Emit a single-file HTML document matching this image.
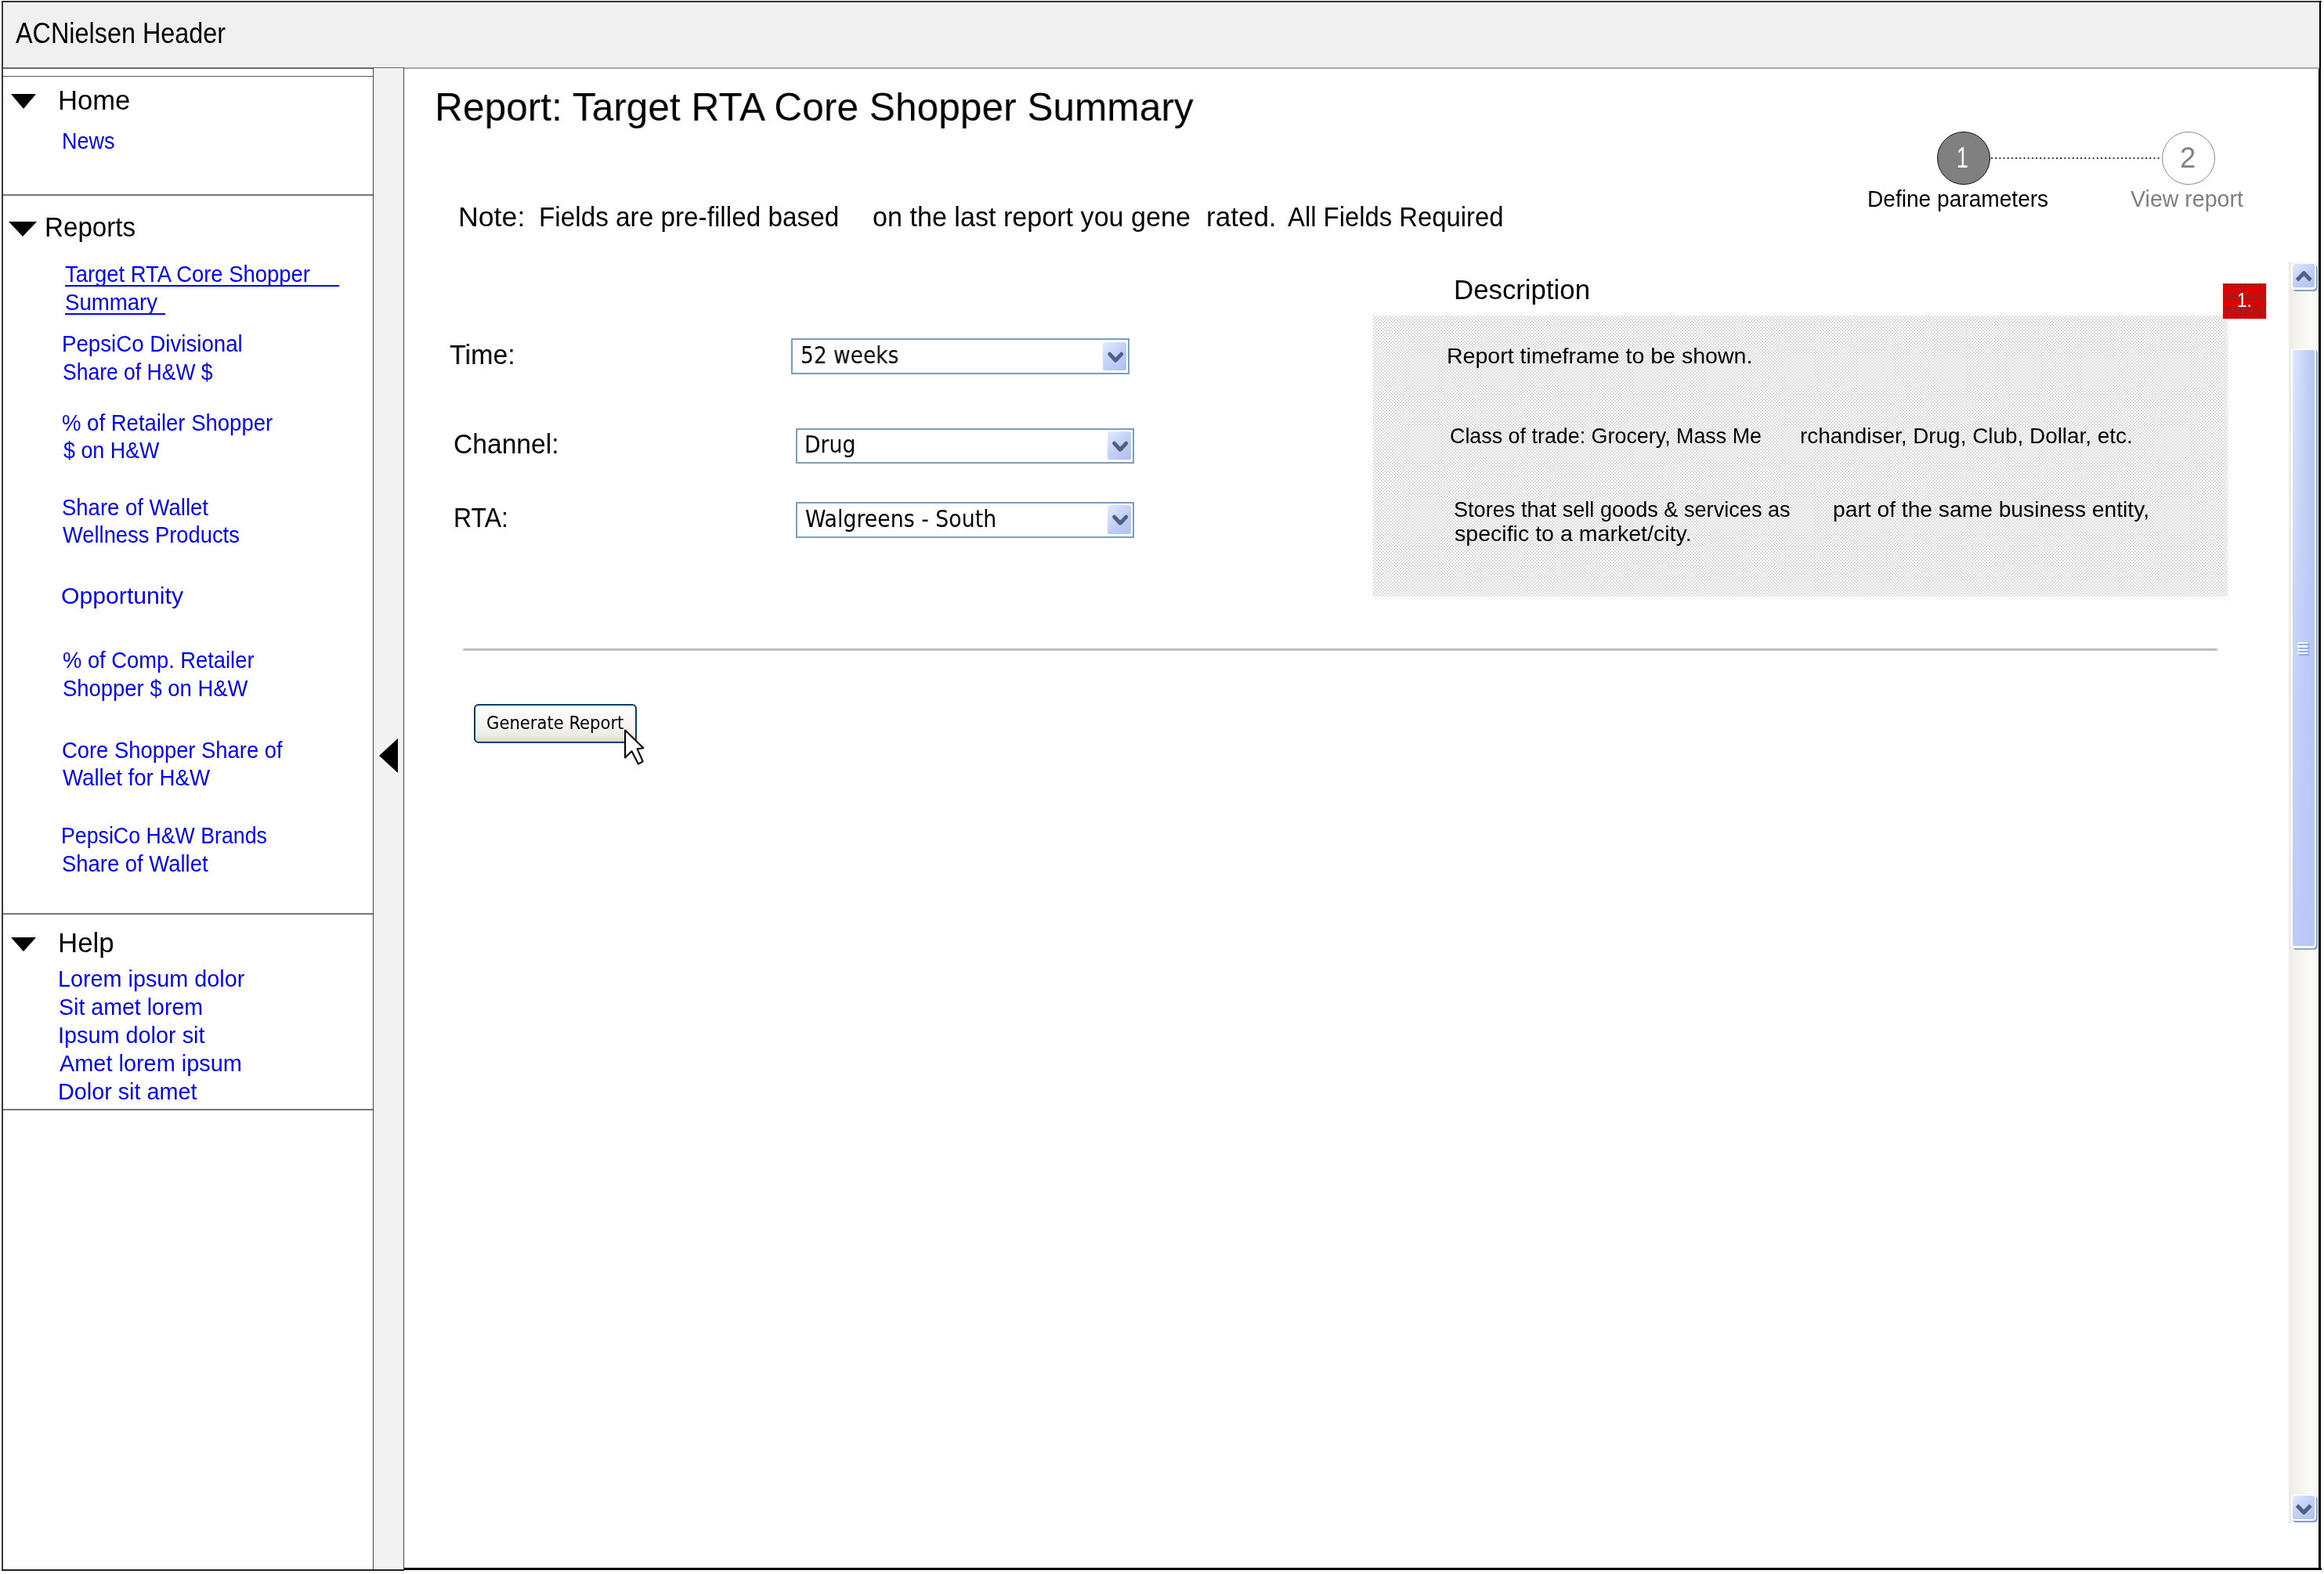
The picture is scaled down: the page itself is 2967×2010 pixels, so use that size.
<!DOCTYPE html>
<html lang="en">
<head>
<meta charset="utf-8">
<title>Report: Target RTA Core Shopper Summary</title>
<style>
html,body{margin:0;padding:0}
body{width:2967px;height:2010px;position:relative;overflow:hidden;background:#fff;font-family:"Liberation Sans",sans-serif;color:#000}
div,span,a,h1,h2,h3,label,i,b,p,button{position:absolute;margin:0;padding:0;box-sizing:border-box}
.t{white-space:pre;line-height:1;font-weight:normal;font-style:normal;transform-origin:0 0;text-decoration:none;display:block}
.dv{font-family:"DejaVu Sans Condensed","DejaVu Sans",sans-serif}
.ul{height:2px;background:#0000ff}
/* frame */
#frame-t{left:2px;top:1px;width:2961.5px;height:2px;background:#333}
#frame-l{left:2px;top:1px;width:1.7px;height:2004.5px;background:#3a3a3a}
#frame-r{left:2961.3px;top:1px;width:2.2px;height:2004px;background:#000}
#frame-r2{left:2959.9px;top:88px;width:2px;height:1916.5px;background:#000}
#frame-b{left:2px;top:2003.9px;width:514px;height:1.7px;background:#222}
#frame-b2{left:516px;top:2002.2px;width:2447.5px;height:3.3px;background:#000}
/* header */
#header{left:3.5px;top:3px;width:2958px;height:85px;background:#f0f0f0}
#header .ln1{left:0;top:83.2px;width:473px;height:1.9px;background:#6a6a6a}
#header .ln2{left:473px;top:83.2px;width:40px;height:1.9px;background:#777}
#header .ln3{left:512.5px;top:83.2px;width:2445.5px;height:1.9px;background:#ababab}
/* left nav */
#nav{left:3.5px;top:88px;width:473px;height:1916px;background:#fff}
#nav .box{left:0;width:473px;border:0 solid #555}
.tri{width:0;height:0;border-style:solid;border-color:#000 transparent transparent transparent}
/* splitter */
#split{left:475.9px;top:86.4px;width:40.3px;height:1918px;background:#f3f3f3;border-left:1.3px solid #444;border-right:1.3px solid #444;border-top:1.5px solid #666}
#split .arr{left:7.3px;top:856px;width:0;height:0;border-style:solid;border-width:22.7px 24.2px 22.7px 0;border-color:transparent #000 transparent transparent}
/* stepper */
.circ{width:68.4px;height:68.4px;border-radius:50%;top:167.5px}
#c1{left:2473px;background:#808080;border:1.2px solid #111}
#c2{left:2760px;background:#fff;border:1.2px solid #8a8a8a}
#dots{left:2542px;top:200.6px;width:218px;height:2.2px;background:radial-gradient(circle at 1.1px 1.1px,#333 0.9px,rgba(51,51,51,0) 1.3px) 0 0/5.2px 2.2px repeat-x}
/* selects */
.sel{height:45.7px;width:432.1px;border:2.4px solid #7b9ebd;background:#fff}
.sel .btn{right:2.2px;top:2.4px;width:30px;height:36.5px;border-radius:2.5px;background:linear-gradient(135deg,#e2eafc 0%,#c3d1f7 50%,#aebff1 100%)}
.sel .btn svg{position:absolute;left:0;top:0}
/* description */
#descbox{left:1752.5px;top:402.9px;width:1091px;height:359px;background-color:#fdfdfd;background-image:radial-gradient(circle at 1px 1px,rgba(110,110,110,.62) 0.3px,rgba(110,110,110,0) 0.95px),radial-gradient(circle at 3px 3px,rgba(110,110,110,.62) 0.3px,rgba(110,110,110,0) 0.95px);background-size:4px 4px}
#red{left:2837.9px;top:361.9px;width:55.2px;height:44.8px;background-color:#e20000;background-image:radial-gradient(circle at 1.5px 1.5px,rgba(70,60,60,.9) 0.5px,rgba(90,70,70,0) 1.1px);background-size:3px 3px}
#hr{left:591px;top:827.5px;width:2240px;height:3.7px;border-radius:2px;background:#bdbdbd}
#gen{left:604.6px;top:899.2px;width:208.2px;height:49.8px;border:2.3px solid #003c74;border-radius:6px;background:linear-gradient(180deg,#ffffff 0%,#f7f6f2 45%,#eeece5 82%,#dcd7cb 100%)}
/* scrollbar */
#sb{left:2922.4px;top:335px;width:37.5px;height:1609.8px;background:linear-gradient(90deg,#ecebe4 0,#f3f2ec 25%,#fbfbf8 75%,#f4f3ee 100%)}
.sbb{left:2.3px;width:32.6px;height:34.2px;border-radius:4.5px;background:#fff;box-shadow:1.8px 2.1px 0 0 #7b9fd8}
.sbb b{left:2.4px;top:1.9px;width:27.9px;height:29.7px;border-radius:2.5px;background:linear-gradient(135deg,#e1e9fc 0%,#c2d0f7 50%,#aec0f2 100%)}
.sbb svg{position:absolute;left:0;top:0}
#thumb{left:2.3px;top:110.1px;width:32.6px;height:765.7px;border-radius:4.5px;background:#fff;box-shadow:1.8px 1.8px 0 0 #7b9fd8}
#thumb b{left:2.4px;top:1.9px;width:27.9px;height:760.6px;border-radius:2.5px;background:linear-gradient(180deg,rgba(184,200,246,0) 0%,rgba(184,200,246,.55) 45%,rgba(184,200,246,.9) 100%),linear-gradient(90deg,#dee7fb 0%,#c9d6f8 50%,#b3c4f4 100%)}
#grip{left:8.8px;top:375px;width:16px;height:18px}
#grip i{left:0;width:13px;height:2.2px;background:#f4f7fe;box-shadow:2.4px 2.2px 0 0 #8fa9ea}

#page{left:0;top:0;width:2967px;height:2010px;will-change:transform}
#navtext,#main,#note,#steps{left:0;top:0;width:0;height:0}

</style>
</head>
<body>
<div id="page">
<div id="header"><i class="ln1"></i><i class="ln2"></i><i class="ln3"></i></div>
<div class="t" style="left:20.00px;top:25.40px;font-size:36.2px;transform:scaleX(0.8947)">ACNielsen Header</div>
<div id="nav">
  <div class="box" style="top:8.8px;height:153.2px;border-top-width:1.3px;border-right-width:1.3px;border-bottom-width:2px;border-bottom-color:#777"></div>
  <div class="box" style="top:1077.8px;height:252px;border-top:2px solid #777;border-bottom:2px solid #777;border-right-width:1.3px"></div>
</div>
<div id="split"><i class="arr"></i></div>
<div id="navtext">
<i class="tri" style="left:13.6px;top:119.8px;border-width:19px 16.8px 0 16.8px"></i>
<h3 class="t" style="left:74.21px;top:111.00px;font-size:34.8px;transform:scaleX(0.9948)">Home</h3>
<a class="t" style="left:79.21px;top:165.90px;font-size:28.6px;transform:scaleX(0.9451);color:#0000ff">News</a>
<i class="tri" style="left:11.2px;top:283px;border-width:19px 18.8px 0 18.8px"></i>
<h3 class="t" style="left:56.79px;top:272.80px;font-size:34.8px;transform:scaleX(0.9528)">Reports</h3>
<a class="t" style="left:83.20px;top:336.20px;font-size:28.6px;transform:scaleX(0.9586);color:#0000ff">Target RTA Core Shopper</a>
<i class="ul" style="left:83px;top:363.8px;width:350.0px"></i>
<a class="t" style="left:83.23px;top:372.40px;font-size:28.6px;transform:scaleX(0.9653);color:#0000ff">Summary</a>
<i class="ul" style="left:83px;top:400.0px;width:128.2px"></i>
<a class="t" style="left:78.56px;top:424.90px;font-size:28.6px;transform:scaleX(0.9680);color:#0000ff">PepsiCo Divisional</a>
<a class="t" style="left:79.57px;top:460.70px;font-size:28.6px;transform:scaleX(0.9271);color:#0000ff">Share of H&amp;W $</a>
<a class="t" style="left:78.54px;top:526.20px;font-size:28.6px;transform:scaleX(0.9623);color:#0000ff">% of Retailer Shopper</a>
<a class="t" style="left:81.20px;top:561.20px;font-size:28.6px;transform:scaleX(0.9400);color:#0000ff">$ on H&amp;W</a>
<a class="t" style="left:79.04px;top:633.70px;font-size:28.6px;transform:scaleX(0.9614);color:#0000ff">Share of Wallet</a>
<a class="t" style="left:80.00px;top:669.40px;font-size:28.6px;transform:scaleX(0.9557);color:#0000ff">Wellness Products</a>
<a class="t" style="left:78.44px;top:746.70px;font-size:28.6px;transform:scaleX(1.0555);color:#0000ff">Opportunity</a>
<a class="t" style="left:79.54px;top:828.70px;font-size:28.6px;transform:scaleX(0.9556);color:#0000ff">% of Comp. Retailer</a>
<a class="t" style="left:79.54px;top:864.90px;font-size:28.6px;transform:scaleX(0.9598);color:#0000ff">Shopper $ on H&amp;W</a>
<a class="t" style="left:79.04px;top:943.70px;font-size:28.6px;transform:scaleX(0.9576);color:#0000ff">Core Shopper Share of</a>
<a class="t" style="left:80.00px;top:979.40px;font-size:28.6px;transform:scaleX(0.9673);color:#0000ff">Wallet for H&amp;W</a>
<a class="t" style="left:78.13px;top:1053.20px;font-size:28.6px;transform:scaleX(0.9345);color:#0000ff">PepsiCo H&amp;W Brands</a>
<a class="t" style="left:79.04px;top:1088.70px;font-size:28.6px;transform:scaleX(0.9598);color:#0000ff">Share of Wallet</a>
<i class="tri" style="left:13.7px;top:1197px;border-width:18.6px 16.9px 0 16.9px"></i>
<h3 class="t" style="left:74.20px;top:1187.30px;font-size:34.8px;transform:scaleX(1.0013)">Help</h3>
<a class="t" style="left:73.69px;top:1236.20px;font-size:28.6px;transform:scaleX(1.0065);color:#0000ff">Lorem ipsum dolor</a>
<a class="t" style="left:74.70px;top:1272.40px;font-size:28.6px;transform:scaleX(0.9989);color:#0000ff">Sit amet lorem</a>
<a class="t" style="left:73.68px;top:1308.20px;font-size:28.6px;transform:scaleX(1.0082);color:#0000ff">Ipsum dolor sit</a>
<a class="t" style="left:75.70px;top:1344.20px;font-size:28.6px;transform:scaleX(1.0106);color:#0000ff">Amet lorem ipsum</a>
<a class="t" style="left:73.69px;top:1380.40px;font-size:28.6px;transform:scaleX(1.0061);color:#0000ff">Dolor sit amet</a>
</div>
<div id="main">
<h1 class="t" style="left:555.29px;top:111.60px;font-size:50.8px;transform:scaleX(0.9775)">Report: Target RTA Core Shopper Summary</h1>
<p id="note">
<span class="t" style="left:585.45px;top:260.00px;font-size:34.8px;transform:scaleX(1.0255)">Note:</span>
<span class="t" style="left:688.29px;top:260.00px;font-size:34.8px;transform:scaleX(0.9571)">Fields are pre-filled based</span>
<span class="t" style="left:1113.52px;top:260.00px;font-size:34.8px;transform:scaleX(0.9807)">on the last report you gene</span>
<span class="t" style="left:1540.39px;top:260.00px;font-size:34.8px;transform:scaleX(1.0070)">rated.</span>
<span class="t" style="left:1644.00px;top:260.00px;font-size:34.8px;transform:scaleX(0.9436)">All Fields Required</span>
</p>
<div id="steps">
<i class="circ" id="c1"></i><i id="dots"></i><i class="circ" id="c2"></i>
<span class="t" style="left:2497.98px;top:182.65px;font-size:37.5px;transform:scaleX(0.7111);color:#fff">1</span>
<span class="t" style="left:2783.03px;top:182.65px;font-size:37.5px;transform:scaleX(0.9722);color:#808080">2</span>
<span class="t" style="left:2384.03px;top:239.70px;font-size:28.6px;transform:scaleX(0.9828)">Define parameters</span>
<span class="t" style="left:2719.70px;top:239.70px;font-size:28.6px;transform:scaleX(0.9989);color:#808080">View report</span>
</div>
<label class="t" style="left:573.70px;top:436.40px;font-size:34.8px;transform:scaleX(0.9767)">Time:</label>
<label class="t" style="left:579.03px;top:549.50px;font-size:34.8px;transform:scaleX(0.9659)">Channel:</label>
<label class="t" style="left:578.56px;top:644.30px;font-size:34.8px;transform:scaleX(0.9190)">RTA:</label>
<div class="sel" style="left:1010.3px;top:432.4px"><i class="btn"><svg width="30" height="36" viewBox="0 0 30 36"><path d="M8.65 15.05 L16.2 23.25 L23.75 15.05" fill="none" stroke="#4d6185" stroke-width="4.9" stroke-linecap="round" stroke-linejoin="round"/></svg></i></div>
<div class="sel" style="left:1016px;top:546.6px"><i class="btn"><svg width="30" height="36" viewBox="0 0 30 36"><path d="M8.65 15.05 L16.2 23.25 L23.75 15.05" fill="none" stroke="#4d6185" stroke-width="4.9" stroke-linecap="round" stroke-linejoin="round"/></svg></i></div>
<div class="sel" style="left:1015.7px;top:641px"><i class="btn"><svg width="30" height="36" viewBox="0 0 30 36"><path d="M8.65 15.05 L16.2 23.25 L23.75 15.05" fill="none" stroke="#4d6185" stroke-width="4.9" stroke-linecap="round" stroke-linejoin="round"/></svg></i></div>
<span class="t dv" style="left:1021.61px;top:440.00px;font-size:29.6px;transform:scaleX(0.9944)">52 weeks</span>
<span class="t dv" style="left:1027.39px;top:553.60px;font-size:29.6px;transform:scaleX(1.0045)">Drug</span>
<span class="t dv" style="left:1028.00px;top:648.60px;font-size:29.6px;transform:scaleX(1.0059)">Walgreens - South</span>
<h2 class="t" style="left:1856.10px;top:353.20px;font-size:34.8px;transform:scaleX(0.9977)">Description</h2>
<div id="descbox"></div>
<span class="t" style="left:1847.06px;top:441.00px;font-size:28.0px;transform:scaleX(1.0196)">Report timeframe to be shown.</span>
<span class="t" style="left:1850.64px;top:543.40px;font-size:28.0px;transform:scaleX(0.9592)">Class of trade: Grocery, Mass Me</span>
<span class="t" style="left:2297.70px;top:543.40px;font-size:28.0px;transform:scaleX(0.9961)">rchandiser, Drug, Club, Dollar, etc.</span>
<span class="t" style="left:1856.43px;top:637.00px;font-size:28.0px;transform:scaleX(0.9686)">Stores that sell goods &amp; services as</span>
<span class="t" style="left:2339.69px;top:637.00px;font-size:28.0px;transform:scaleX(1.0074)">part of the same business entity,</span>
<span class="t" style="left:1857.40px;top:667.50px;font-size:28.0px;transform:scaleX(1.0200)">specific to a market/city.</span>
<div id="red"></div>
<span class="t" style="left:2856.30px;top:370.80px;font-size:25px;transform:scaleX(0.9048);color:#fff">1.</span>
<i id="hr"></i>
<div id="gen"></div>
<span class="t dv" style="left:621.21px;top:911.60px;font-size:23.8px;transform:scaleX(0.9872)">Generate Report</span>
<svg id="cursor" style="position:absolute;left:790px;top:925px" width="40" height="60" viewBox="790 925 40 60"><path d="M798.1 932.6 L798.1 967.6 L806.5 959.3 L814.9 975.6 L820.7 972.4 L813.6 956.4 L821.4 955.2 Z" fill="#fff" stroke="#000" stroke-width="2.1" stroke-linejoin="round"/></svg>
<div id="sb">
  <i class="sbb" style="top:0.6px"><b></b><svg width="34" height="36" viewBox="0 0 34 36"><path d="M7.5 21.8 L16.3 12.7 L25 21.8" fill="none" stroke="#4d6185" stroke-width="5" stroke-linecap="butt" stroke-linejoin="round"/></svg></i>
  <i id="thumb"><b></b><span id="grip"><i style="top:0"></i><i style="top:4.4px"></i><i style="top:8.8px"></i><i style="top:13.2px"></i></span></i>
  <i class="sbb" style="top:1573.1px"><b></b><svg width="34" height="36" viewBox="0 0 34 36"><path d="M7.5 14.4 L16.3 23.4 L25 14.4" fill="none" stroke="#4d6185" stroke-width="5" stroke-linecap="butt" stroke-linejoin="round"/></svg></i>
</div>
</div>
<i id="frame-t"></i><i id="frame-l"></i><i id="frame-r"></i><i id="frame-r2"></i><i id="frame-b"></i><i id="frame-b2"></i>

</div>
</body>
</html>
